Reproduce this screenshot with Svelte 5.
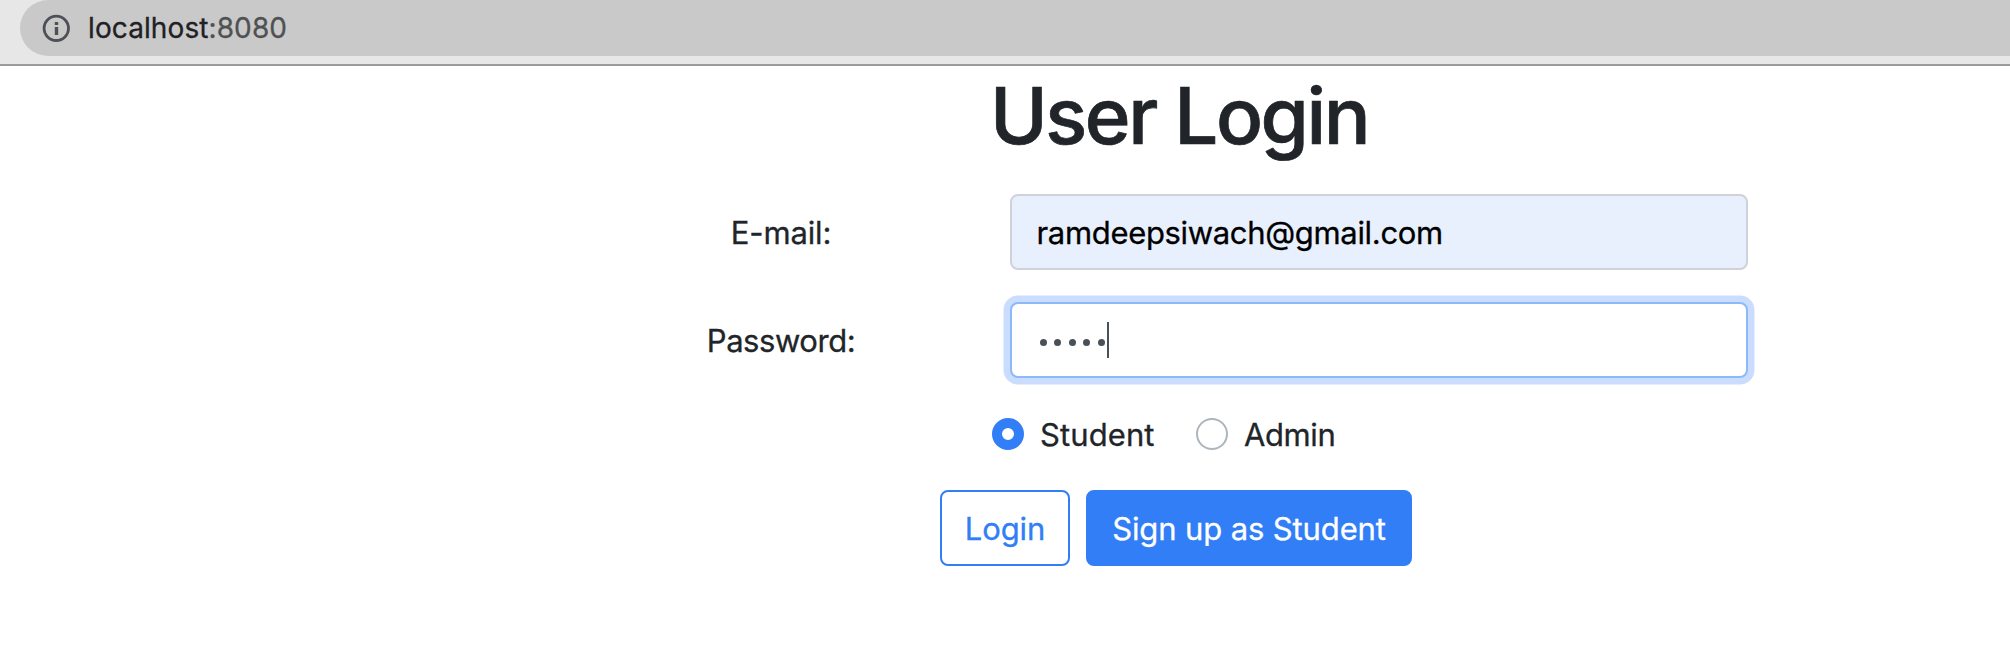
<script>
  const email = 'ramdeepsiwach@gmail.com';
  const password = [0, 1, 2, 3, 4];
  let role = $state('Student');
</script>

<header class="toolbar">
  <div class="address">
    <svg class="info" viewBox="0 0 28 28" width="28" height="28" aria-hidden="true">
      <circle cx="14.3" cy="14.3" r="12.2" fill="none" stroke="#4d5157" stroke-width="2.8" />
      <rect x="12.8" y="8" width="3.4" height="3" fill="#4d5157" />
      <rect x="12.8" y="13" width="3.4" height="8" fill="#4d5157" />
    </svg>
    <span class="url">localhost<span class="port">:8080</span></span>
  </div>
</header>

<main>
  <h1>User Login</h1>
  <form>
    <div class="row">
      <span class="label email-label">E-mail:</span>
      <div class="field filled"><span class="email">{email}</span></div>
    </div>
    <div class="row">
      <span class="label password-label">Password:</span>
      <div class="field focused">
        {#each password as dot (dot)}<i class="dot"></i>{/each}
        <i class="caret"></i>
      </div>
    </div>
    <div class="roles">
      <label class="role">
        <input type="radio" name="role" value="Student" bind:group={role} />
        <span class="student">Student</span>
      </label>
      <label class="role">
        <input type="radio" name="role" value="Admin" bind:group={role} />
        <span class="admin">Admin</span>
      </label>
    </div>
    <div class="actions">
      <button type="button" class="login"><span>Login</span></button>
      <button type="button" class="signup"><span>Sign up as {role}</span></button>
    </div>
  </form>
</main>

<style>
  :global(body) {
    margin: 0;
    background: #fff;
    overflow: hidden;
  }
  .toolbar,
  main {
    font-family: Inter, 'Liberation Sans', sans-serif;
    -webkit-text-stroke-width: 0.3px;
    box-sizing: border-box;
    color: #212529;
  }
  .toolbar {
    height: 66px;
    padding-left: 20px;
    background: #e7e7e7;
    border-bottom: 2px solid #9b9b9b;
  }
  .address {
    display: flex;
    align-items: center;
    height: 56px;
    padding-left: 22px;
    background: #c9c9c9;
    border-radius: 28px 0 0 28px;
    box-sizing: border-box;
  }
  .info {
    margin-right: 18px;
    flex: none;
  }
  .url {
    font-size: 28px;
    line-height: 56px;
    color: #202124;
    letter-spacing: 0.1px;
  }
  .port {
    color: #505153;
  }
  main {
    font-size: 31px;
    line-height: 48px;
  }
  h1 {
    margin: 0 0 0 990px;
    padding-top: 2px;
    height: 126px;
    font-size: 78px;
    line-height: 96px;
    font-weight: 500;
    letter-spacing: -2.45px;
    white-space: nowrap;
    -webkit-text-stroke-width: 0.7px;
  }
  .row {
    display: grid;
    grid-template-columns: 442px 738px;
    column-gap: 8px;
    margin: 0 0 32px 560px;
    align-items: center;
    height: 76px;
  }
  .label {
    padding-top: 2px;
    text-align: center;
  }
  .email-label {
    letter-spacing: -0.15px;
  }
  .password-label {
    letter-spacing: -0.45px;
  }
  .email {
    padding-top: 2px;
    letter-spacing: -0.33px;
  }
  .student,
  .admin {
    padding-top: 2px;
  }
  .student {
    letter-spacing: 0.1px;
  }
  .admin {
    letter-spacing: -0.4px;
  }
  .field {
    box-sizing: border-box;
    height: 76px;
    display: flex;
    align-items: center;
    padding-left: 24.5px;
    border: 2px solid #ced4da;
    border-radius: 8px;
    background: #fff;
  }
  .filled {
    background: #e8effd;
    border-color: #cdd3d8;
    color: #000;
  }
  .focused {
    border-color: #8bb9fa;
    box-shadow: 0 0 0 6.5px #cbddfe;
    padding-left: 28px;
  }
  .dot {
    width: 7px;
    height: 7px;
    margin-right: 7.4px;
    margin-top: 5px;
    border-radius: 50%;
    background: #495057;
  }
  .caret {
    width: 2px;
    height: 36px;
    margin-left: -4.5px;
    background: #495057;
  }
  .roles {
    display: flex;
    margin: 8px 0 0 992px;
    height: 48px;
  }
  .role {
    display: flex;
    align-items: center;
    width: 204px;
  }
  input {
    appearance: none;
    box-sizing: border-box;
    flex: none;
    width: 32px;
    height: 32px;
    margin: 0 16px 0 0;
    border: 2px solid #adb5bd;
    border-radius: 50%;
    background: #fff;
  }
  input:checked {
    border: 10px solid #317ef7;
  }
  .actions {
    display: flex;
    gap: 16px;
    margin: 32px 0 0 940px;
  }
  button {
    box-sizing: border-box;
    height: 76px;
    padding: 2px 0 0;
    border: 2px solid #317ef7;
    border-radius: 8px;
    font: inherit;
    letter-spacing: -0.12px;
    white-space: nowrap;
  }
  .login {
    width: 130px;
    color: #317ef7;
    background: #fff;
  }
  .signup {
    width: 326px;
    color: #fff;
    background: #317ef7;
  }
</style>
